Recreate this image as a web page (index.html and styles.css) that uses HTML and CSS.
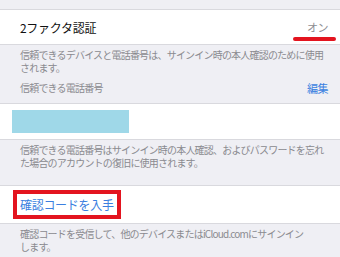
FILE: index.html
```html
<!DOCTYPE html>
<html lang="ja">
<head>
<meta charset="utf-8">
<link rel="stylesheet" href="styles.css">
</head>
<body>
<div class="page">
  <div class="cell first">
    <span class="label">2ファクタ認証</span>
    <span class="value">オン<span class="mark-line"></span></span>
  </div>
  <div class="footer">信頼できるデバイスと電話番号は、サインイン時の本人確認のために使用<br>されます。</div>
  <div class="header">
    <span>信頼できる電話番号</span>
    <span class="link">編集</span>
  </div>
  <div class="cell phone">
    <div class="redacted"></div>
  </div>
  <div class="footer">信頼できる電話番号はサインイン時の本人確認、およびパスワードを忘れ<br>た場合のアカウントの復旧に使用されます。</div>
  <div class="cell action">
    <span class="link label boxed">確認コードを入手</span>
  </div>
  <div class="footer">確認コードを受信して、他のデバイスまたはiCloud.comにサインイン<br>します。</div>
</div>
</body>
</html>
```
FILE: styles.css
```css
html, body {
  margin: 0;
  padding: 0;
  background: #efeff4;
}
.page {
  width: 340px;
  height: 257px;
  overflow: hidden;
  padding-top: 9px;
  box-sizing: border-box;
  font-family: "Noto Sans CJK JP", "Noto Sans", sans-serif;
}
.cell {
  background: #fff;
  border-top: 1px solid #d9d9de;
  border-bottom: 1px solid #d9d9de;
  height: 34px;
  display: flex;
  align-items: center;
  justify-content: space-between;
  padding: 0 12px 0 20px;
}
.label {
  font-size: 12px;
  letter-spacing: -0.3px;
  color: #111;
}
.value {
  position: relative;
  font-size: 11px;
  letter-spacing: -0.5px;
  color: #8e8e93;
}
.mark-line {
  position: absolute;
  left: -14px;
  top: 18px;
  width: 43px;
  height: 4px;
  border-radius: 2px;
  background: #e3141f;
}
.footer {
  font-size: 10px;
  letter-spacing: -0.8px;
  line-height: 13px;
  color: #8a8a8f;
  padding: 3px 10px 0 20px;
  white-space: nowrap;
}
.header {
  display: flex;
  justify-content: space-between;
  align-items: center;
  font-size: 10px;
  line-height: 14px;
  letter-spacing: -0.8px;
  color: #8a8a8f;
  padding: 7px 12px 8px 20px;
}
.header .link {
  font-size: 11px;
  letter-spacing: -0.5px;
}
.link {
  color: #3b7fe0;
}
.cell.phone {
  height: 35px;
  justify-content: flex-start;
  padding-left: 12px;
}
.redacted {
  width: 117px;
  height: 23px;
  background: #9fd8e8;
}
.cell.action {
  margin-top: 16px;
  height: 37px;
}
.boxed {
  position: relative;
  color: #3b7fe0;
}
.boxed::after {
  content: "";
  position: absolute;
  left: -7px;
  right: -7px;
  top: -6px;
  bottom: -6px;
  border: 4px solid #e3141f;
}
```
